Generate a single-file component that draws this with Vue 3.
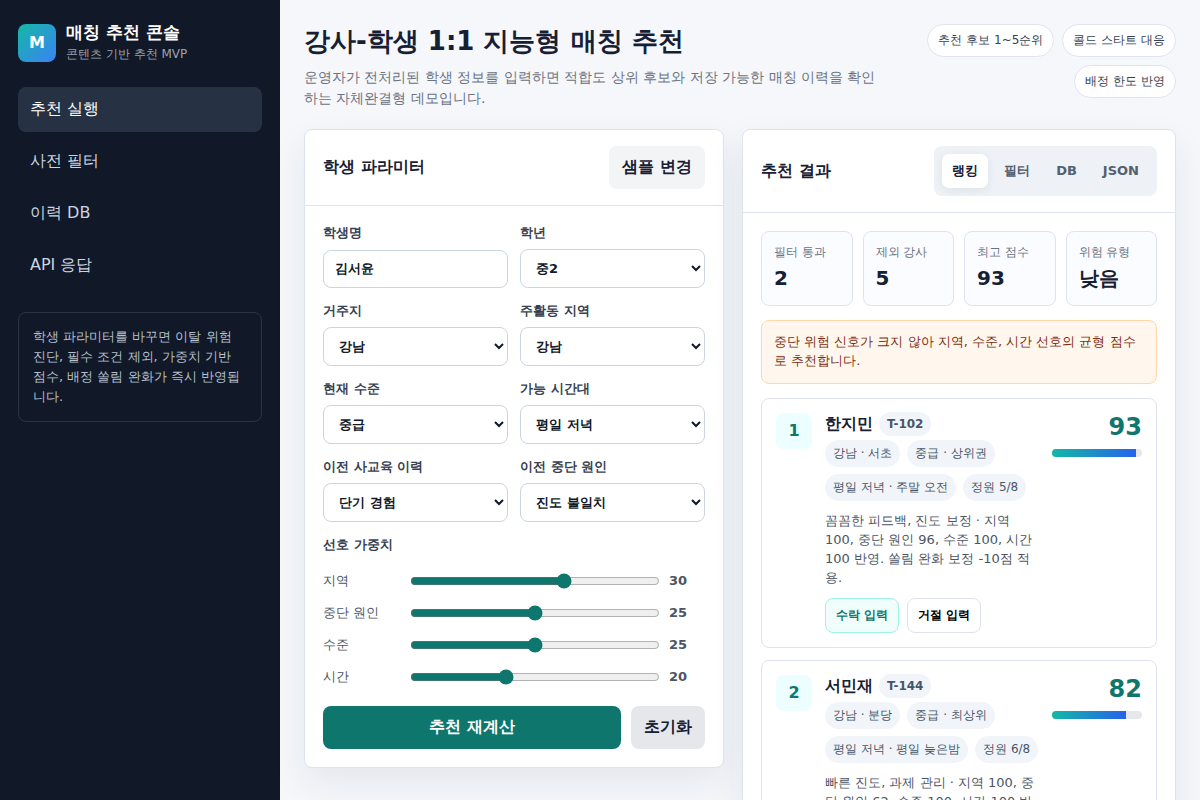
<script setup>
import { ref, reactive } from 'vue'

const menu = ['추천 실행', '사전 필터', '이력 DB', 'API 응답']
const badges = ['추천 후보 1~5순위', '콜드 스타트 대응', '배정 한도 반영']

const studentName = ref('김서윤')
const selects = reactive([
  { id: 'grade', label: '학년', value: '중2', options: ['중1', '중2', '중3', '고1'] },
  { id: 'home', label: '거주지', value: '강남', options: ['강남', '서초', '분당'] },
  { id: 'area', label: '주활동 지역', value: '강남', options: ['강남', '서초', '분당'] },
  { id: 'level', label: '현재 수준', value: '중급', options: ['초급', '중급', '상위권', '최상위'] },
  { id: 'slot', label: '가능 시간대', value: '평일 저녁', options: ['평일 저녁', '평일 늦은밤', '주말 오전'] },
  { id: 'history', label: '이전 사교육 이력', value: '단기 경험', options: ['없음', '단기 경험', '장기 경험'] },
  { id: 'reason', label: '이전 중단 원인', value: '진도 불일치', options: ['진도 불일치', '시간 불일치'] },
])
const weights = reactive([
  { id: 'w-area', label: '지역', value: 30 },
  { id: 'w-reason', label: '중단 원인', value: 25 },
  { id: 'w-level', label: '수준', value: 25 },
  { id: 'w-time', label: '시간', value: 20 },
])

const tabs = ['랭킹', '필터', 'DB', 'JSON']
const activeTab = ref('랭킹')
const metrics = [
  { label: '필터 통과', value: '2' },
  { label: '제외 강사', value: '5' },
  { label: '최고 점수', value: '93' },
  { label: '위험 유형', value: '낮음' },
]
const candidates = [
  {
    rank: 1,
    name: '한지민',
    code: 'T-102',
    tags: ['강남 · 서초', '중급 · 상위권', '평일 저녁 · 주말 오전', '정원 5/8'],
    text: '꼼꼼한 피드백, 진도 보정 · 지역 100, 중단 원인 96, 수준 100, 시간 100 반영. 쏠림 완화 보정 -10점 적용.',
    score: 93,
  },
  {
    rank: 2,
    name: '서민재',
    code: 'T-144',
    tags: ['강남 · 분당', '중급 · 최상위', '평일 저녁 · 평일 늦은밤', '정원 6/8'],
    text: '빠른 진도, 과제 관리 · 지역 100, 중단 원인 62, 수준 100, 시간 100 반영. 쏠림 완화 보정 -10점 적용.',
    score: 82,
  },
]
</script>

<template>
  <div class="app" lang="ko">
    <aside class="sidebar">
      <div class="brand">
        <div class="logo">M</div>
        <div>
          <div class="brand-name">매칭 추천 콘솔</div>
          <div class="brand-sub">콘텐츠 기반 추천 MVP</div>
        </div>
      </div>
      <nav class="menu">
        <a v-for="(item, i) in menu" :key="item" href="#" :class="{ active: i === 0 }">{{ item }}</a>
      </nav>
      <p class="note">학생 파라미터를 바꾸면 이탈 위험 진단, 필수 조건 제외, 가중치 기반 점수, 배정 쏠림 완화가 즉시 반영됩니다.</p>
    </aside>

    <main class="main">
      <header class="topbar">
        <div class="heading">
          <h1>강사-학생 1:1 지능형 매칭 추천</h1>
          <p>운영자가 전처리된 학생 정보를 입력하면 적합도 상위 후보와 저장 가능한 매칭 이력을 확인하는 자체완결형 데모입니다.</p>
        </div>
        <div class="badges">
          <span v-for="b in badges" :key="b">{{ b }}</span>
        </div>
      </header>

      <div class="columns">
        <section class="panel">
          <div class="panel-head">
            <h2>학생 파라미터</h2>
            <button type="button" class="btn soft">샘플 변경</button>
          </div>
          <form class="panel-body" @submit.prevent>
            <div class="fields">
              <div class="field">
                <label for="name">학생명</label>
                <input id="name" v-model="studentName" type="text" />
              </div>
              <div v-for="s in selects" :key="s.id" class="field">
                <label :for="s.id">{{ s.label }}</label>
                <select :id="s.id" v-model="s.value">
                  <option v-for="o in s.options" :key="o">{{ o }}</option>
                </select>
              </div>
            </div>
            <h3>선호 가중치</h3>
            <div class="weights">
              <div v-for="w in weights" :key="w.id" class="weight">
                <label :for="w.id">{{ w.label }}</label>
                <input :id="w.id" v-model.number="w.value" type="range" min="5" max="45" />
                <output :for="w.id">{{ w.value }}</output>
              </div>
            </div>
            <div class="form-actions">
              <button type="submit" class="btn primary">추천 재계산</button>
              <button type="button" class="btn muted">초기화</button>
            </div>
          </form>
        </section>

        <section class="panel">
          <div class="panel-head">
            <h2>추천 결과</h2>
            <div class="tabs">
              <button
                v-for="t in tabs"
                :key="t"
                type="button"
                :class="{ active: t === activeTab }"
                @click="activeTab = t"
              >{{ t }}</button>
            </div>
          </div>
          <div class="panel-body">
            <div class="metrics">
              <div v-for="m in metrics" :key="m.label" class="metric">
                <span>{{ m.label }}</span>
                <strong>{{ m.value }}</strong>
              </div>
            </div>
            <p class="alert">중단 위험 신호가 크지 않아 지역, 수준, 시간 선호의 균형 점수로 추천합니다.</p>
            <div class="results">
              <article v-for="c in candidates" :key="c.code" class="result">
                <div class="rank">{{ c.rank }}</div>
                <div>
                  <div class="who">
                    <span class="name">{{ c.name }}</span>
                    <span class="code">{{ c.code }}</span>
                  </div>
                  <div class="tags">
                    <span v-for="t in c.tags" :key="t">{{ t }}</span>
                  </div>
                  <p>{{ c.text }}</p>
                  <div class="decide">
                    <button type="button" class="accept">수락 입력</button>
                    <button type="button">거절 입력</button>
                  </div>
                </div>
                <div class="score">
                  <strong>{{ c.score }}</strong>
                  <div class="bar"><div class="fill" :style="{ width: c.score + '%' }"></div></div>
                </div>
              </article>
            </div>
          </div>
        </section>
      </div>
    </main>
  </div>
</template>

<style>
body {
  margin: 0;
  background: #f5f7fb;
}
</style>

<style scoped>
.app,
.app * {
  box-sizing: border-box;
}
.app {
  display: grid;
  grid-template-columns: 280px minmax(0, 1fr);
  min-height: 100vh;
  font-family: "DejaVu Sans", sans-serif;
  color: #172033;
}
h1, h2, h3, p {
  margin: 0;
}
button, input, select {
  font: inherit;
}
button {
  cursor: pointer;
}

.sidebar {
  padding: 24px 18px;
  background: #111827;
}
.brand {
  display: flex;
  align-items: flex-start;
  gap: 10px;
  height: 38px;
  margin-bottom: 25px;
}
.logo {
  display: grid;
  place-items: center;
  width: 38px;
  height: 38px;
  border-radius: 8px;
  background: linear-gradient(135deg, #14b8a6, #3b82f6);
  color: #fff;
  font-size: 16px;
  font-weight: 700;
  line-height: 20px;
}
.brand-name {
  color: #fff;
  font-size: 17px;
  font-weight: 700;
  line-height: 17px;
}
.brand-sub {
  margin-top: 5px;
  color: #9ca3af;
  font-size: 12px;
  line-height: 16px;
}
.menu {
  display: grid;
  gap: 7px;
}
.menu a {
  height: 45px;
  padding: 12px;
  border-radius: 8px;
  color: #cbd5e1;
  font-size: 16px;
  line-height: 19px;
  text-decoration: none;
}
.menu a.active {
  background: #263244;
  color: #fff;
}
.note {
  margin-top: 24px;
  padding: 14px;
  border: 1px solid #2b3444;
  border-radius: 8px;
  color: #b6c0ce;
  font-size: 13px;
  line-height: 20px;
}

.main {
  padding: 24px;
}
.topbar {
  display: flex;
  justify-content: space-between;
  gap: 18px;
  margin-bottom: 20px;
}
.heading {
  max-width: 580px;
}
h1 {
  font-size: 26px;
  line-height: 35px;
}
.heading p {
  margin-top: 8px;
  color: #6b7280;
  font-size: 14px;
  line-height: 21px;
}
.badges {
  display: flex;
  flex: 0 0 260px;
  flex-wrap: wrap;
  justify-content: flex-end;
  align-content: flex-start;
  gap: 8px;
}
.badges span {
  padding: 8px 10px;
  border: 1px solid #dfe4ee;
  border-radius: 999px;
  background: #fff;
  color: #374151;
  font-size: 12px;
  line-height: 15px;
}

.columns {
  display: grid;
  grid-template-columns: 420px minmax(0, 1fr);
  align-items: start;
  gap: 18px;
}
.panel {
  border: 1px solid #dfe3ef;
  border-radius: 8px;
  background: #fff;
  box-shadow: 0 14px 36px rgba(23, 32, 51, 0.08);
}
.panel-head {
  display: flex;
  align-items: center;
  justify-content: space-between;
  padding: 16px 18px;
  border-bottom: 1px solid #dfe3ef;
}
h2 {
  padding-bottom: 2px;
  font-size: 16px;
  line-height: 19px;
}
.panel-body {
  padding: 18px;
}
.btn {
  padding: 11px 13px 13px;
  border: 0;
  border-radius: 8px;
  color: #172033;
  font-size: 16px;
  font-weight: 700;
  line-height: 19px;
}
.btn.soft {
  background: #f3f4f6;
}
.btn.muted {
  background: #e5e7eb;
}
.btn.primary {
  flex: 1;
  background: #0f766e;
  color: #fff;
}

.fields {
  display: grid;
  grid-template-columns: 1fr 1fr;
  gap: 14px 12px;
}
.field {
  display: flex;
  flex-direction: column;
  justify-content: space-between;
  height: 64px;
}
.field label,
h3 {
  color: #374151;
  font-size: 13px;
  font-weight: 700;
  line-height: 18px;
}
.field input,
.field select {
  width: 100%;
  height: 38px;
  padding: 0 11px;
  border: 1px solid #cbd5e1;
  border-radius: 8px;
  background: #fff;
  color: #111827;
  font-size: 13px;
  font-weight: 700;
}
.field select {
  height: 39px;
}
h3 {
  margin-top: 14px;
}
.weights {
  display: grid;
  gap: 14px;
  margin-top: 18px;
}
.weight {
  display: grid;
  grid-template-columns: 78px 1fr 36px;
  align-items: center;
  gap: 9px;
  color: #4b5563;
  font-size: 13px;
  line-height: 18px;
}
.weight input {
  width: 100%;
  height: 16px;
  margin: 0;
  accent-color: #0f766e;
}
.weight output {
  font-weight: 700;
}
.form-actions {
  display: flex;
  gap: 10px;
  margin-top: 20px;
}

.tabs {
  display: flex;
  gap: 6px;
  padding: 8px;
  border-radius: 8px;
  background: #eef2f7;
}
.tabs button {
  padding: 8px 10px;
  border: 0;
  border-radius: 7px;
  background: none;
  color: #526070;
  font-size: 13px;
  font-weight: 700;
  line-height: 18px;
}
.tabs button.active {
  background: #fff;
  color: #172033;
  box-shadow: 0 2px 8px rgba(23, 32, 51, 0.08);
}
.metrics {
  display: grid;
  grid-template-columns: repeat(4, minmax(0, 1fr));
  gap: 10px;
}
.metric {
  padding: 12px 12px 15px;
  border: 1px solid #dfe3ef;
  border-radius: 8px;
  background: #fbfcff;
}
.metric span,
.metric strong {
  display: block;
}
.metric span {
  color: #6b7280;
  font-size: 12px;
  line-height: 16px;
}
.metric strong {
  margin-top: 6px;
  font-size: 20px;
  line-height: 24px;
}
.alert {
  margin-top: 14px;
  padding: 11px 12px 13px;
  border: 1px solid #fed7aa;
  border-radius: 8px;
  background: #fff7ed;
  color: #7c2d12;
  font-size: 13px;
  line-height: 19px;
}
.results {
  display: grid;
  gap: 12px;
  margin-top: 14px;
}
.result {
  display: grid;
  grid-template-columns: 36px minmax(0, 1fr) 90px;
  gap: 13px;
  padding: 14px;
  border: 1px solid #dfe3ef;
  border-radius: 8px;
}
.rank {
  display: grid;
  place-items: center;
  width: 36px;
  height: 36px;
  border-radius: 8px;
  background: #ecfeff;
  color: #0f766e;
  font-weight: 700;
  line-height: 20px;
}
.who {
  display: flex;
  align-items: center;
  gap: 6px;
  height: 22px;
}
.name {
  font-size: 16px;
  font-weight: 700;
  line-height: 20px;
}
.code,
.tags span {
  border-radius: 999px;
  background: #f1f5f9;
  color: #475569;
  font-size: 12px;
  line-height: 15px;
}
.code {
  padding: 5px 8px 4px;
  font-weight: 700;
}
.tags {
  display: flex;
  flex-wrap: wrap;
  gap: 7px;
  margin: 5px 0 10px;
}
.tags span {
  padding: 6px 8px;
}
.result p {
  color: #4b5563;
  font-size: 13px;
  line-height: 19px;
}
.decide {
  display: flex;
  gap: 8px;
  margin-top: 11px;
}
.decide button {
  padding: 9px 10px;
  border: 1px solid #dfe3ef;
  border-radius: 8px;
  background: #fff;
  color: #000;
  font-size: 12px;
  font-weight: 700;
  line-height: 15px;
}
.decide .accept {
  border-color: #99f6e4;
  background: #f0fdfa;
  color: #0f766e;
}
.score {
  text-align: right;
}
.score strong {
  display: block;
  color: #0f766e;
  font-size: 24px;
  line-height: 28px;
}
.bar {
  height: 8px;
  margin-top: 8px;
  overflow: hidden;
  border-radius: 999px;
  background: #e5e7eb;
}
.fill {
  height: 100%;
  background: linear-gradient(90deg, #14b8a6, #2563eb);
}
</style>
